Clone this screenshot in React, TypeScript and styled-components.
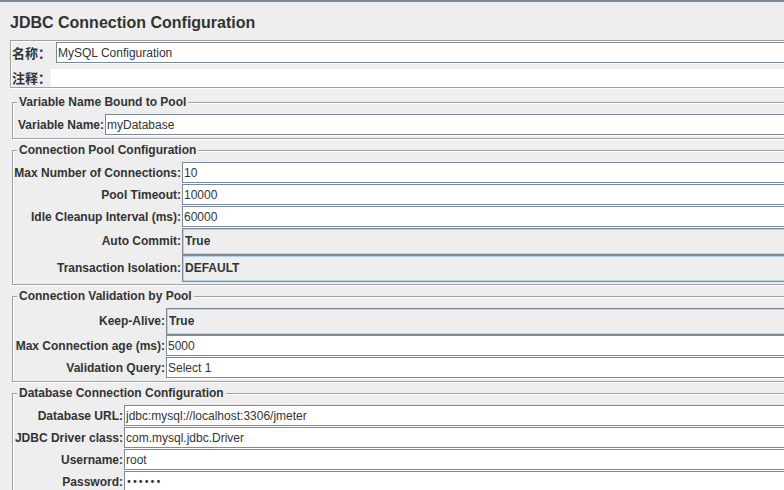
import React from "react";
import styled, { createGlobalStyle, css } from "styled-components";

const GlobalStyle = createGlobalStyle`
  *, *::before, *::after { box-sizing: border-box; }
  body {
    margin: 0;
    background: #eeeeee;
    color: #333333;
    font: 12px/17px "Liberation Sans", Arial, "Noto Sans CJK SC", sans-serif;
  }
`;

const Pane = styled.main`
  height: 100vh;
  overflow: hidden;
  border-top: 2px solid #7a8a99;
  padding: 11px 0 0 10px;
`;

const Title = styled.h1`
  margin: 0 0 7px;
  font-size: 16px;
  line-height: 20px;
  font-weight: bold;
`;

const IdentityPanel = styled.div`
  display: flex;
  flex-direction: column;
  gap: 5px;
  border: 1px solid #a0a0a0;
  border-right: 0;
  padding: 1px 0 0 1px;
  box-shadow: inset 1px 1px 0 #ffffff, 0 1px 0 #ffffff;
`;

const IdentityRow = styled.div<{ $gap?: number }>`
  display: flex;
  align-items: center;
  gap: ${(p) => p.$gap ?? 0}px;
`;

const IdentityLabel = styled.label`
  flex: none;
  white-space: nowrap;
  font: bold 13px/18px "Noto Sans CJK SC", sans-serif;
`;

const Sections = styled.div`
  display: flex;
  flex-direction: column;
  gap: 3px;
  padding: 6px 0 0 2px;
`;

const Section = styled.fieldset`
  min-width: 0;
  margin: 0;
  border: 1px solid #a0a0a0;
  border-right: 0;
  padding: 3px 0 2px 4px;
  box-shadow: inset 1px 1px 0 #ffffff, 0 1px 0 #ffffff;
`;

const Legend = styled.legend`
  height: 17px;
  padding: 0 2px;
  background: #eeeeee;
  font-weight: bold;
`;

const Rows = styled.div<{ $labelWidth: number }>`
  display: grid;
  grid-template-columns: ${(p) => p.$labelWidth}px minmax(0, 1fr);
  align-items: center;
`;

const Label = styled.label`
  justify-self: end;
  padding-right: 1px;
  font-weight: bold;
  white-space: nowrap;
`;

const control = css`
  display: block;
  width: 100%;
  min-width: 0;
  margin: 0;
  border-radius: 0;
  outline: 0;
  color: #333333;
  font-family: inherit;
  font-size: 12px;
`;

const TextInput = styled.input`
  ${control}
  height: 21px;
  margin-bottom: 1px;
  border: 1px solid #7a8a99;
  border-right: 0;
  padding: 0 1px;
  background: #ffffff;
  box-shadow: 1px 1px 0 #ffffff;

  &[type="password"] {
    font-family: "DejaVu Sans", sans-serif;
    font-size: 10px;
  }
`;

const PlainInput = styled.input`
  ${control}
  height: 18px;
  border: 0;
  padding: 0 2px;
  background: #ffffff;
`;

const Select = styled.select`
  ${control}
  appearance: none;
  height: 27px;
  border: 1px solid #7a8a99;
  border-right: 0;
  padding: 0 2px 2px;
  background: #eeeeee;
  box-shadow: inset 1px 1px 0 #b8cfe5, inset 0 -1px 0 #b8cfe5;
  font-weight: bold;
`;

type Field = {
  id: string;
  label: string;
  value: string;
  type?: "text" | "password";
  options?: string[];
};

type Group = { title: string; labelWidth: number; fields: Field[] };

const groups: Group[] = [
  {
    title: "Variable Name Bound to Pool",
    labelWidth: 88,
    fields: [{ id: "variable", label: "Variable Name:", value: "myDatabase" }],
  },
  {
    title: "Connection Pool Configuration",
    labelWidth: 165,
    fields: [
      { id: "max-connections", label: "Max Number of Connections:", value: "10" },
      { id: "timeout", label: "Pool Timeout:", value: "10000" },
      { id: "cleanup", label: "Idle Cleanup Interval (ms):", value: "60000" },
      { id: "commit", label: "Auto Commit:", value: "True", options: ["True", "False"] },
      { id: "isolation", label: "Transaction Isolation:", value: "DEFAULT", options: ["DEFAULT"] },
    ],
  },
  {
    title: "Connection Validation by Pool",
    labelWidth: 149,
    fields: [
      { id: "keep-alive", label: "Keep-Alive:", value: "True", options: ["True", "False"] },
      { id: "max-age", label: "Max Connection age (ms):", value: "5000" },
      { id: "query", label: "Validation Query:", value: "Select 1" },
    ],
  },
  {
    title: "Database Connection Configuration",
    labelWidth: 107,
    fields: [
      { id: "url", label: "Database URL:", value: "jdbc:mysql://localhost:3306/jmeter" },
      { id: "driver", label: "JDBC Driver class:", value: "com.mysql.jdbc.Driver" },
      { id: "username", label: "Username:", value: "root" },
      { id: "password", label: "Password:", value: "secret", type: "password" },
    ],
  },
];

function FieldRow({ field }: { field: Field }) {
  return (
    <>
      <Label htmlFor={field.id}>{field.label}</Label>
      {field.options ? (
        <Select id={field.id} defaultValue={field.value}>
          {field.options.map((option) => (
            <option key={option}>{option}</option>
          ))}
        </Select>
      ) : (
        <TextInput
          id={field.id}
          type={field.type ?? "text"}
          defaultValue={field.value}
          spellCheck={false}
        />
      )}
    </>
  );
}

export default function App() {
  return (
    <>
      <GlobalStyle />
      <Pane>
        <Title>JDBC Connection Configuration</Title>
        <IdentityPanel>
          <IdentityRow $gap={5}>
            <IdentityLabel htmlFor="name">名称：</IdentityLabel>
            <TextInput id="name" defaultValue="MySQL Configuration" spellCheck={false} />
          </IdentityRow>
          <IdentityRow>
            <IdentityLabel htmlFor="comment">注释：</IdentityLabel>
            <PlainInput id="comment" defaultValue="" />
          </IdentityRow>
        </IdentityPanel>
        <Sections>
          {groups.map((group) => (
            <Section key={group.title}>
              <Legend>{group.title}</Legend>
              <Rows $labelWidth={group.labelWidth}>
                {group.fields.map((field) => (
                  <FieldRow key={field.id} field={field} />
                ))}
              </Rows>
            </Section>
          ))}
        </Sections>
      </Pane>
    </>
  );
}
